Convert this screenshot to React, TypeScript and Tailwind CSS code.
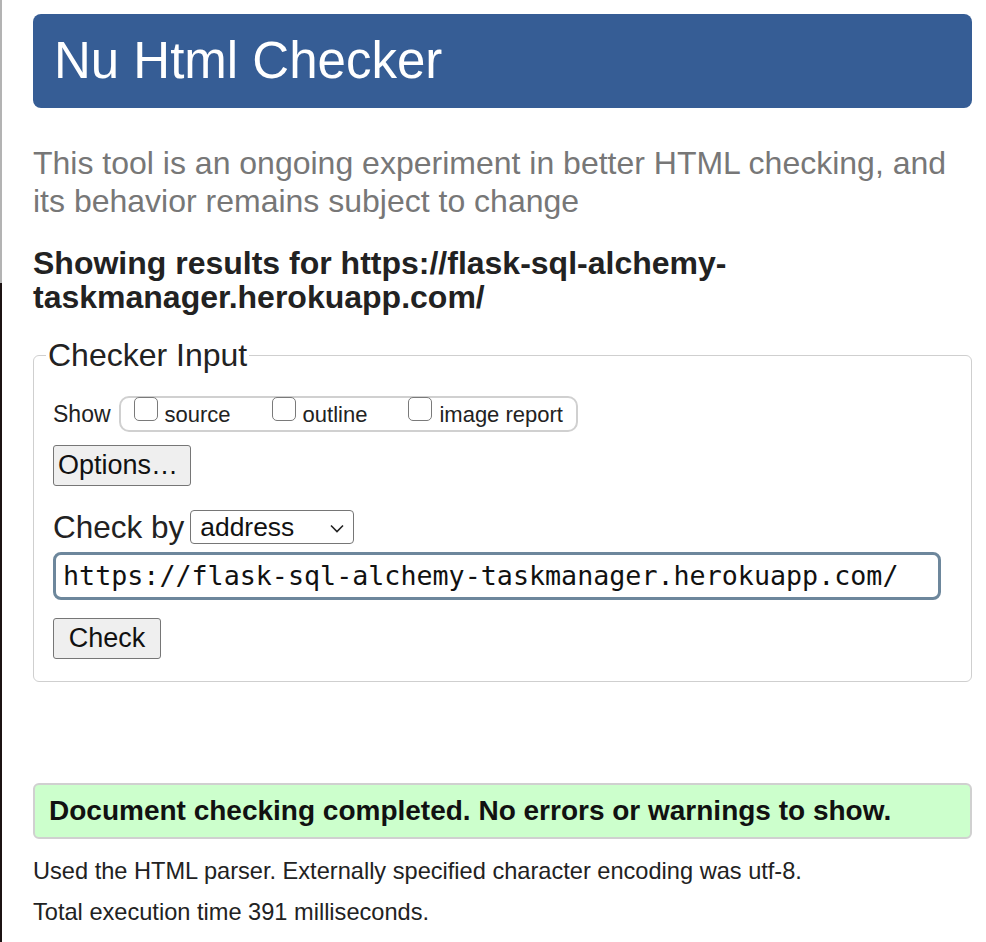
import React from "react";

function Box({ label }: { label: string }) {
  return (
    <div className="flex items-start">
      <span className="block w-[24px] h-[24px] -mt-[1px] border-[1.5px] border-[#7a7a7a] rounded-[5px] bg-white" />
      <span className="ml-[7px] mt-[4px] text-[22px] leading-[25px] text-[#222]">{label}</span>
    </div>
  );
}

export default function App() {
  return (
    <div
      className="flex min-h-screen bg-white"
      style={{ fontFamily: '"Liberation Sans", Arial, sans-serif' }}
    >
      <div className="w-[2px] flex flex-col shrink-0">
        <div className="h-[283px] bg-[#b3b3b3]" />
        <div className="flex-1 bg-[#1c1313]" />
      </div>
      <div className="flex-1 pl-[31px] pr-[14px] pt-[14px] pb-[20px]">
        <div className="h-[94px] rounded-[8px] bg-[#365d95] flex items-center pl-[21px] pr-[19px] text-white text-[51px]">
          Nu Html Checker
        </div>
        <p className="mt-[36px] text-[32px] leading-[38px] text-[#777]">
          This tool is an ongoing experiment in better HTML checking, and its behavior remains subject to change
        </p>
        <h2 className="mt-[26px] font-bold text-[32px] leading-[34px] text-[#222]">
          Showing results for https://flask-sql-alchemy-taskmanager.herokuapp.com/
        </h2>
        <fieldset className="mt-[23px] border border-[#cfcfcf] rounded-[6px] px-[12px] pb-[22px]">
          <legend className="px-[2px] text-[32px] leading-[37px] text-[#222]">Checker Input</legend>
          <div className="pl-[7px]">
            <div className="mt-[22px] flex items-center">
              <span className="text-[23px] text-[#222]">Show</span>
              <div className="ml-[8px] h-[36px] border-2 border-[#d0d0d0] rounded-[10px] px-[13px] flex items-start gap-[41px]">
                <Box label="source" />
                <Box label="outline" />
                <Box label="image report" />
              </div>
            </div>
            <button className="mt-[13px] block h-[41px] w-[138px] text-left px-[4px] border border-[#767676] rounded-[3px] bg-[#efefef] text-[27px] leading-none text-[#111]">
              Options…
            </button>
            <div className="mt-[23px] flex items-center h-[36px]">
              <span className="text-[31.5px] leading-[36px] text-[#222]">Check by</span>
              <div className="ml-[6px] h-[34px] w-[164px] border border-[#767676] rounded-[4px] pl-[9px] pr-[9px] flex items-center justify-between bg-white">
                <span className="text-[26.4px] text-[#111] leading-none">address</span>
                <svg width="14" height="9" viewBox="0 0 14 9" className="mt-[2px]">
                  <path d="M1 1.5 L7 7.5 L13 1.5" fill="none" stroke="#222" strokeWidth="1.6" />
                </svg>
              </div>
            </div>
            <div
              className="mt-[7px] w-[888px] h-[48px] border-[3px] border-[#6d879c] rounded-[8px] pl-[7px] flex items-center text-[26.7px] text-[#111]"
              style={{ fontFamily: '"DejaVu Sans Mono", "Liberation Mono", monospace' }}
            >
              https://flask-sql-alchemy-taskmanager.herokuapp.com/
            </div>
            <button className="mt-[18px] block h-[41px] w-[108px] border border-[#767676] rounded-[3px] bg-[#efefef] text-[27px] leading-none text-[#111]">
              Check
            </button>
          </div>
        </fieldset>
        <div className="mt-[101px] h-[56px] border-2 border-[#d0d0d0] rounded-[6px] bg-[#ccffcc] px-[14px] flex items-center font-bold text-[28px] text-[#111]">
          Document checking completed. No errors or warnings to show.
        </div>
        <p className="mt-[18px] text-[23.6px] leading-[28px] text-[#222]">
          Used the HTML parser. Externally specified character encoding was utf-8.
        </p>
        <p className="mt-[13px] text-[23.6px] leading-[28px] text-[#222]">Total execution time 391 milliseconds.</p>
      </div>
    </div>
  );
}
